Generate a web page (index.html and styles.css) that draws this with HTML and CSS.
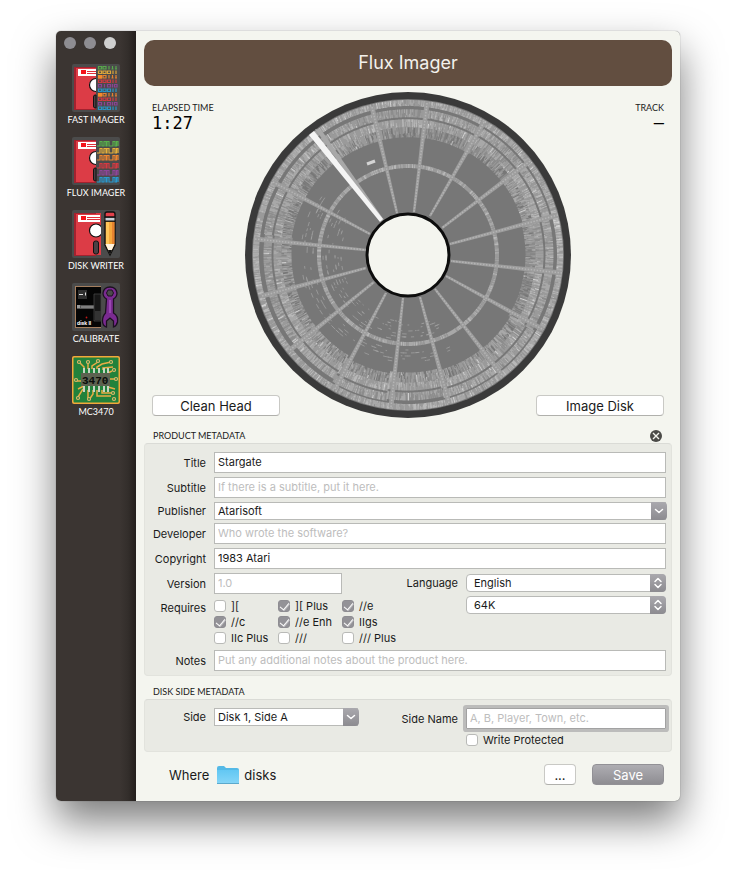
FILE: index.html
```html
<!DOCTYPE html>
<html lang="en">
<head>
<meta charset="utf-8">
<meta name="viewport" content="width=device-width, initial-scale=1">
<title>Flux Imager</title>
<link rel="stylesheet" href="styles.css">
</head>
<body>
<svg class="defs" width="0" height="0" aria-hidden="true">
  <defs>
    <g id="floppy">
      <path d="M2 3h22v43H2z" fill="#a3222f"/>
      <path d="M4 4h20v41H4z" fill="#dc3c46"/>
      <path d="M6 5h18v7H6z" fill="#fff"/>
      <path d="M9 6h5v4H9z" fill="#f5141c"/>
      <path d="M15 7h9v1h-9zM15 9h9v1h-9z" fill="#e0303a"/>
    </g>
    <g id="floppy-half">
      <use href="#floppy"/>
      <path d="M24 14.500a6.500 6.500 0 0 0 0 13z" fill="#fff"/>
      <path d="M24 14.500a6.500 6.500 0 0 0 0 13" fill="none" stroke="#111" stroke-width="1.200"/>
      <path d="M24 31h-1q-1.500 0-1.500 2v9q0 2 1.500 2h1z" fill="#4a4044" stroke="#111"/>
    </g>
    <path id="bits-a" d="M.5.5h3v2.500h-3zM5 .5h3v2.500H5zM11 0v3.500M14.500 0v3.500M18 0v3.500M13.500 3h2M17 3h2" fill="none"/>
    <path id="bits-b" d="M.5.500h3v2.500h-3zM5 .5h3v2.500H5zM9.500 .5h3v2.500h-3zM15 0v3.500M18 0v3.500" fill="none"/>
    <path id="bits-c" d="M.5.5h3v2.500h-3zM6.500 0v3.500M9.500 .5h3v2.500h-3zM14.500 0v3.500M16.500 .5h2.500v2.500h-2.500z" fill="none"/>
    <path id="wave" d="M0 5h3V.5h2V5h2V.5h2V5h1V.5h2V5h4V.5h2V5h1.500V.5H21V5" fill="none"/>
    <linearGradient id="folder-fill" x1="0" y1="0" x2="0" y2="1">
      <stop offset="0" stop-color="#62c7f3"/><stop offset="1" stop-color="#86d6f8"/>
    </linearGradient>
  </defs>
</svg>

<div class="window">
  <nav class="sidebar" aria-label="Tools">
    <div class="lights">
      <button class="light" aria-label="Close"></button>
      <button class="light" aria-label="Minimize"></button>
      <button class="light light-off" aria-label="Zoom"></button>
    </div>
    <a class="tool" href="#fast">
      <svg class="tool-icon" viewBox="0 0 48 48">
        <rect width="48" height="48" rx="2" fill="#4b4b4b"/>
        <use href="#floppy-half"/>
        <g stroke-width="1.200">
          <use href="#bits-a" x="26" y="2" stroke="#58a84b"/>
          <use href="#bits-b" x="26" y="6.500" stroke="#dda63a"/>
          <use href="#bits-a" x="26" y="11" stroke="#e8812f"/>
          <use href="#bits-b" x="26" y="15.500" stroke="#cf3a41"/>
          <use href="#bits-c" x="26" y="20" stroke="#8a4394"/>
          <use href="#bits-b" x="26" y="24.500" stroke="#2a94c4"/>
          <use href="#bits-a" x="26" y="29" stroke="#e8812f"/>
          <use href="#bits-b" x="26" y="33.500" stroke="#cf3a41"/>
          <use href="#bits-c" x="26" y="38" stroke="#8a4394"/>
          <use href="#bits-b" x="26" y="42.500" stroke="#2a94c4"/>
          <path d="M26 11h4v3.500h-4zM26 29h4v3.500h-4z" fill="#f58a2c"/>
        </g>
      </svg>
      <span>FAST IMAGER</span>
    </a>
    <a class="tool" href="#flux">
      <svg class="tool-icon" viewBox="0 0 48 48">
        <rect width="48" height="48" rx="2" fill="#4b4b4b"/>
        <use href="#floppy-half"/>
        <g stroke-width="1.200">
          <use href="#wave" x="25" y="4" stroke="#58b04b"/>
          <use href="#wave" x="25" y="11" stroke="#e6b13c"/>
          <use href="#wave" x="25" y="18" stroke="#ee852f"/>
          <use href="#wave" x="25" y="26" stroke="#d63a41"/>
          <use href="#wave" x="25" y="33" stroke="#8f459a"/>
          <use href="#wave" x="25" y="40" stroke="#2a9ad0"/>
        </g>
      </svg>
      <span>FLUX IMAGER</span>
    </a>
    <a class="tool" href="#writer">
      <svg class="tool-icon" viewBox="0 0 48 48">
        <rect width="48" height="48" rx="2" fill="#4b4b4b"/>
        <use href="#floppy"/>
        <path d="M24 3h5v42h-5z" fill="#dc3c46"/>
        <path d="M24 5h4v7h-4z" fill="#fff"/>
        <path d="M24 7h4v1h-4zM24 9h4v1h-4z" fill="#e0303a"/>
        <circle cx="24" cy="20.500" r="6.500" fill="#fff" stroke="#111" stroke-width="1.200"/>
        <rect x="21.500" y="31" width="5" height="13" rx="2" fill="#4a4044" stroke="#111"/>
        <path d="M29 2h4v44h-4z" fill="#4b4b4b"/>
        <path d="M33 11h10v24l-5 10-5-10z" fill="#f6a83c" stroke="#111" stroke-width="1.400"/>
        <path d="M34 12h3v22h-3z" fill="#ffc65a"/>
        <path d="M40 12h2.500v22H40z" fill="#e68330"/>
        <path d="M33.500 34h9L38 44z" fill="#fff3df"/>
        <path d="M36 40h4l-2 5z" fill="#111"/>
        <path d="M33 7h10v4H33z" fill="#c9d1d8" stroke="#111"/>
        <path d="M33 7V4q0-2 2-2h6q2 0 2 2v3z" fill="#e0414b" stroke="#111" stroke-width="1.400"/>
      </svg>
      <span>DISK WRITER</span>
    </a>
    <a class="tool" href="#calibrate">
      <svg class="tool-icon" viewBox="0 0 48 48">
        <rect width="48" height="48" rx="2" fill="#4b4b4b"/>
        <path d="M3 3h26v42H3z" fill="#a57e5e"/>
        <path d="M4 4h25v40H4z" fill="#050505"/>
        <path d="M6 7h9v9H6z" fill="#303030"/>
        <path d="M7 11h4v1H7zM13 9.500h1v3h-1z" fill="#ddd"/>
        <path d="M5 22h17v4H5z" fill="#555"/><path d="M9 23.500h13v1H9z" fill="#aaa"/><path d="M5 22h3v3H5z" fill="#999"/>
        <path d="M22 11h7v27h-7z" fill="#171717" stroke="#444" stroke-width=".8"/>
        <path d="M23 28h6v9h-6z" fill="#333"/>
        <circle cx="14.500" cy="34.500" r=".9" fill="#c21919"/>
        <text x="5" y="42" class="disk-name">disk II</text>
        <path d="M34.500 16Q31 14 31 10q1-6 7-6t7 6q0 4-3.500 6v14q5 3 4 9-1 4-4 5v-6l-3.500-3-3.500 3v6q-4-1-4-6 0-5 3-8z" fill="#7a2b91" stroke="#1c1020" stroke-width="1.300"/>
        <path d="M34.500 10 36 7h4l1.500 3L40 13h-4z" fill="#4b4b4b" stroke="#1c1020"/>
        <path d="M37 17h2v13h-2z" fill="#9a48b2"/>
      </svg>
      <span>CALIBRATE</span>
    </a>
    <a class="tool" href="#mc3470">
      <svg class="tool-icon" viewBox="0 0 48 48">
        <rect width="48" height="48" rx="2" fill="#f2a93a"/>
        <rect x="1.500" y="1.500" width="45" height="45" rx="1" fill="#22823b"/>
        <g fill="none" stroke="#e8ac45" stroke-width="1.500">
          <path d="M12 14V11L7 6M16 13V6M20 13V10l6-4M25 13v-2l5-3 9-2M31 14v-2l10-1M36 17l4-2M38 23h6M10 25H4M12 30l-6 3M11 33l-5 8M16 34v8M21 34v4l-4 6M25 34v6h14M30 34v3h11M36 31l7 2"/>
        </g>
        <g fill="#22823b" stroke="#ddb96b" stroke-width="1.200">
          <circle cx="7" cy="6" r="1.500"/><circle cx="16" cy="6" r="1.500"/><circle cx="26" cy="5" r="1.500"/><circle cx="39" cy="6" r="1.500"/><circle cx="42" cy="14" r="1.500"/><circle cx="44" cy="23" r="1.500"/><circle cx="4" cy="24" r="1.500"/><circle cx="6" cy="42" r="1.500"/><circle cx="17" cy="43" r="1.500"/><circle cx="41" cy="37" r="1.500"/><circle cx="42" cy="43" r="1.500"/>
        </g>
        <path d="M12 12v24M17 12v24M22 12v24M27 12v24M32 12v24M36 12v24" stroke="#c7d5c4" stroke-width="2"/>
        <path d="M9 17h29v13H9z" fill="#5c6250"/>
        <text x="10" y="28" class="chip-name">3470</text>
      </svg>
      <span>MC3470</span>
    </a>
  </nav>

  <main class="main">
    <h1 class="banner">Flux Imager</h1>

    <section class="stage">
      <svg class="disk" id="disk" viewBox="-163 -163 326 326" role="img" aria-label="Disk flux map">
        <circle r="163" fill="#3a3a3a"/>
        <circle r="156" fill="#777"/>
        <g id="flux"></g>
        <circle r="41" fill="#f4f5ef" stroke="#0d0d0d" stroke-width="3"/>
      </svg>
      <div class="stat">
        <span class="stat-name">ELAPSED TIME</span>
        <span class="stat-value">1:27</span>
      </div>
      <div class="stat stat-right">
        <span class="stat-name">TRACK</span>
        <span class="stat-value">–</span>
      </div>
      <button class="push stage-button">Clean Head</button>
      <button class="push stage-button stage-button-right">Image Disk</button>
    </section>

    <div class="section-head">
      <h2>PRODUCT METADATA</h2>
      <button class="clear" aria-label="Clear metadata">
        <svg viewBox="0 0 12 12"><circle cx="6" cy="6" r="6" fill="#4b4b48"/><path d="M3 3l6 6M9 3l-6 6" stroke="#f4f5ef" stroke-width="1.400"/></svg>
      </button>
    </div>
    <form class="panel product">
      <div class="row"><label for="title">Title</label><input class="field" id="title" type="text" value="Stargate"></div>
      <div class="row"><label for="subtitle">Subtitle</label><input class="field" id="subtitle" type="text" placeholder="If there is a subtitle, put it here."></div>
      <div class="row row-tight"><label for="publisher">Publisher</label>
        <div class="combo"><select id="publisher"><option>Atarisoft</option></select><svg class="arrow" viewBox="0 0 16 18"><path d="M4.500 7.500L8 10.500l3.500-3"/></svg></div>
      </div>
      <div class="row"><label for="developer">Developer</label><input class="field" id="developer" type="text" placeholder="Who wrote the software?"></div>
      <div class="row"><label for="copyright">Copyright</label><input class="field" id="copyright" type="text" value="1983 Atari"></div>
      <div class="split">
        <div class="split-left">
          <div class="row"><label for="version">Version</label><input class="field field-short" id="version" type="text" placeholder="1.0"></div>
          <div class="row row-top" role="group" aria-labelledby="requires"><span class="label" id="requires">Requires</span>
            <div class="checks">
              <label class="check"><input type="checkbox">][</label>
              <label class="check"><input type="checkbox" checked>][ Plus</label>
              <label class="check"><input type="checkbox" checked>//e</label>
              <label class="check"><input type="checkbox" checked>//c</label>
              <label class="check"><input type="checkbox" checked>//e Enh</label>
              <label class="check"><input type="checkbox" checked>IIgs</label>
              <label class="check"><input type="checkbox">IIc Plus</label>
              <label class="check"><input type="checkbox">///</label>
              <label class="check"><input type="checkbox">/// Plus</label>
            </div>
          </div>
        </div>
        <div class="split-right">
          <label for="language">Language</label>
          <div class="popup"><select id="language"><option>English</option></select><svg class="arrow" viewBox="0 0 16 18"><path d="M5 7.500L8 4.500l3 3M5 10.500l3 3 3-3"/></svg></div>
          <div class="popup memory"><select aria-label="Memory"><option>64K</option></select><svg class="arrow" viewBox="0 0 16 18"><path d="M5 7.500L8 4.500l3 3M5 10.500l3 3 3-3"/></svg></div>
        </div>
      </div>
      <div class="row"><label for="notes">Notes</label><input class="field" id="notes" type="text" placeholder="Put any additional notes about the product here."></div>
    </form>

    <div class="section-head section-head-next"><h2>DISK SIDE METADATA</h2></div>
    <form class="panel side">
      <div class="row row-tight"><label for="side">Side</label>
        <div class="combo combo-short"><select id="side"><option>Disk 1, Side A</option></select><svg class="arrow" viewBox="0 0 16 18"><path d="M4.500 7.500L8 10.500l3.500-3"/></svg></div>
      </div>
      <div class="side-name">
        <label for="side-name">Side Name</label>
        <input class="field focused" id="side-name" type="text" placeholder="A, B, Player, Town, etc.">
        <label class="check protect"><input type="checkbox">Write Protected</label>
      </div>
    </form>

    <footer class="footer">
      <span>Where</span>
      <svg class="folder" viewBox="0 0 24 20"><path d="M1 3q0-2 2-2h5l2 2h11q2 0 2 2v13H1z" fill="#54b9e6"/><path d="M1 5h22v13q0 1-1 1H2q-1 0-1-1z" fill="url(#folder-fill)"/><path d="M1 18.500h22" stroke="#5ba9cc"/></svg>
      <span class="folder-name">disks</span>
      <button class="push browse">...</button>
      <button class="push save">Save</button>
    </footer>
  </main>
</div>
<script src="disk.js"></script>
</body>
</html>
```

FILE: disk.js
```js
// Draws the flux map: recorded tracks as radial ticks, sector seams as spokes.
(function () {
  var flux = document.getElementById('flux');
  var seed = 3470;

  function random() {
    seed = (seed * 1664525 + 1013904223) % 4294967296;
    return seed / 4294967296;
  }

  function add(name, attributes) {
    var node = document.createElementNS('http://www.w3.org/2000/svg', name);
    Object.keys(attributes).forEach(function (key) { node.setAttribute(key, attributes[key]); });
    flux.appendChild(node);
  }

  function point(radius, angle) {
    return (radius * Math.cos(angle)).toFixed(2) + ' ' + (radius * Math.sin(angle)).toFixed(2);
  }

  var shades = ['#7e7e7e', '#8c8c8c', '#9a9a9a', '#a8a8a8', '#b8b8b8', '#d0d0d0'];
  var paths = shades.map(function () { return ''; });

  function tick(inner, outer, angle, shade) {
    paths[shade] += 'M' + point(inner, angle) + 'L' + point(outer, angle);
  }

  // Seams, as outer and inner ends, clockwise from the index mark.
  var seams = [
    [-36, -148, -11, -42], [19, -152, 6, -43], [76, -133, 22, -39], [122, -94, 34, -27],
    [150, -40, 42, -11], [154, 18, 43, 6], [134, 74, 38, 21], [94, 120, 27, 34],
    [41, 148, 12, 42], [-17, 152, -5, 43], [-73, 134, -22, 38], [-118, 95, -34, 27],
    [-146, 41, -42, 13], [-153, -16, -42, -5], [-135, -73, -38, -21]
  ];

  // Outer tracks: every sector has its own density and blank gaps.
  var sectors = 16;
  var bands = [[155, 149, 3], [149, 146, -1], [146, 138, 2.4], [138, 136, -1], [136, 128, 2.6], [128, 118, 1.7]];
  for (var s = 0; s < sectors; s++) {
    var start = -1.815 + s * Math.PI * 2 / sectors;
    var end = start + Math.PI * 2 / sectors;
    var shift = random() * 3 - 1.5;
    bands.forEach(function (band, b) {
      var outer = band[0] - (b > 1 ? shift : 0);
      var inner = band[1] - (b > 0 ? shift : 0);
      if (band[2] < 0) { return; }
      var level = band[2] + (random() - 0.5) * 0.8;
      for (var a = start; a < end; a += 1 / outer) {
        // Neighbouring ticks share a tone; their lengths vary inside the band.
        var from = outer;
        while (from > inner) {
          var to = Math.max(inner, from - 2 - random() * 6);
          if (b < 5 || random() < 0.8) {
            var shade = Math.round(level + (random() - 0.5) * 2.6 + (random() < 0.04 ? 2 : 0));
            tick(to, from, a, Math.max(0, Math.min(5, shade)));
          }
          from = to;
        }
      }
    });
  }

  // The single track written half way in.
  for (var m = 0; m < Math.PI * 2; m += 0.012) {
    tick(87, 91, m, 2 + Math.floor(random() * 2.4));
  }

  shades.forEach(function (shade, i) {
    add('path', { d: paths[i], stroke: shade, 'stroke-width': 1.1, fill: 'none' });
  });

  // Stray flux on the left and lower tracks.
  var stray = '';
  for (var n = 0; n < 230; n++) {
    var angle = 1.1 + random() * 2.6;
    var distance = random() < 0.6 ? 67 + Math.round(random() * 6) * 3 : 95 + Math.round(random() * 4) * 3;
    stray += 'M' + point(distance, angle) + 'L' + point(distance, angle + 0.015 + random() * 0.045);
  }
  add('path', { d: stray, stroke: '#a0a0a0', 'stroke-width': 0.8, fill: 'none' });
  add('path', { d: 'M-41 -91L-33 -94', stroke: '#d4d4d4', 'stroke-width': 3 });

  seams.forEach(function (p) {
    var span = Math.hypot(p[0] - p[2], p[1] - p[3]);
    var dx = (p[0] - p[2]) / span;
    var dy = (p[1] - p[3]) / span;
    var points = [
      [p[0] - dy * 2.5, p[1] + dx * 2.5], [p[0] + dy * 2.5, p[1] - dx * 2.5],
      [p[2] + dy * 1.2, p[3] - dx * 1.2], [p[2] - dy * 1.2, p[3] + dx * 1.2]
    ].map(function (q) { return q[0].toFixed(1) + ',' + q[1].toFixed(1); }).join(' ');
    add('polygon', { points: points, fill: '#9d9d9d' });
    var line = 'M' + p[0] + ' ' + p[1] + 'L' + p[2] + ' ' + p[3];
    add('path', { d: line, stroke: '#b4b4b4', 'stroke-width': 1.5, 'stroke-dasharray': '1.5 1.5', fill: 'none' });
  });

  // Index mark.
  add('polygon', { points: '-93,-126 -86,-124 -24,-35 -27,-34', fill: '#a8a8a8' });
  add('polygon', { points: '-99,-120 -94,-124 -25,-36 -28,-33', fill: '#f4f4f4' });
})();
```

FILE: styles.css
```css
* { box-sizing: border-box; }

body {
  margin: 0;
  padding: 31px 56px 80px;
  background: #fff;
  color: #1a1a1a;
  font: 11px/12px Inter, "Liberation Sans", sans-serif;
}

button, input, select { font: inherit; color: inherit; margin: 0; }
.defs { position: absolute; }

.window {
  display: flex;
  overflow: hidden;
  border-radius: 5px;
  background: #f4f5ef;
  box-shadow: 0 20px 40px rgba(0, 0, 0, .52), 0 0 1px rgba(0, 0, 0, .6);
}

/* Sidebar */
.sidebar {
  flex: 0 0 80px;
  background: linear-gradient(to right, #3b3532 64px, #332e2b 72px, #241f1d);
}

.lights { display: flex; gap: 8px; padding: 6px 8px 15px; }
.light { width: 12px; height: 12px; padding: 0; border: 0; border-radius: 50%; background: #8e8d92; }
.light-off { background: #d0d0d0; }

.tool {
  display: flex;
  flex-direction: column;
  align-items: center;
  gap: 2px;
  height: 73px;
  color: #fff;
  font: 9px/12px Lato, sans-serif;
  text-decoration: none;
  white-space: nowrap;
}
.tool-icon { width: 48px; height: 48px; }
.disk-name { font: bold 5px Inter, sans-serif; fill: #fff; }
.chip-name { font: bold 11px "Liberation Mono", monospace; fill: #0b0d0a; }

/* Main column */
.main { flex: 1; min-width: 0; padding: 9px 8px 16px; }

.banner {
  margin: 0 0 6px;
  border-radius: 10px;
  background: #624e40;
  color: #f3f1ec;
  font-size: 18px;
  font-weight: 400;
  line-height: 46px;
  text-align: center;
}

.stage {
  display: grid;
  grid-template-columns: 1fr 1fr;
  grid-template-rows: 1fr auto;
  padding: 0 8px;
}
.disk { grid-area: 1 / 1 / 3 / 3; justify-self: center; width: 326px; height: 326px; }
.stat { grid-area: 1 / 1; display: flex; flex-direction: column; align-items: flex-start; padding-top: 10px; }
.stat-right { grid-area: 1 / 2; align-items: flex-end; }
.stat-name { font: 9px/12px Lato, sans-serif; }
.stat-value { font: 17px/18px "DejaVu Sans Mono", monospace; color: #000; }
.stage-button { grid-area: 2 / 1; width: 128px; margin-bottom: 2px; }
.stage-button-right { grid-area: 2 / 2; justify-self: end; }

.push {
  height: 21px;
  padding: 0;
  border: 1px solid #c9c9c5;
  border-bottom-color: #b0b0ac;
  border-radius: 4px;
  background: #fff;
  font-size: 13px;
  line-height: 18px;
}

.section-head { display: flex; align-items: center; justify-content: space-between; height: 12px; margin: 12px 10px 1px 9px; }
.section-head-next { margin-top: 10px; }
.section-head h2 { margin: 0; font: 9px/12px Lato, sans-serif; }
.clear { width: 12px; height: 12px; padding: 0; border: 0; background: none; }
.clear svg { display: block; }

.panel { border: 1px solid #e2e3dd; border-top-color: #dadbd6; border-radius: 4px; background: #e9eae4; }
.product { display: flex; flex-direction: column; gap: 4px; padding: 8px 5px 4px; }

.row { display: grid; grid-template-columns: 56px 1fr; column-gap: 8px; align-items: center; }
.row > label, .row > .label { justify-self: end; }
.row-tight { height: 18px; }
.product .row-tight { margin-bottom: -1px; }
.row-top { align-items: start; }
.row-top .label { padding-top: 2px; }

.field {
  width: 100%;
  height: 21px;
  padding: 0 3px 1px;
  border: 1px solid #b9bab7;
  border-radius: 0;
  outline: 0;
  background: #fff;
}
.field::placeholder { color: #bdbdbd; opacity: 1; }
.field-short { width: 128px; }
.focused { border-color: #a2a2a2; box-shadow: 0 0 0 3px #bcbcbb; border-radius: 1px; }

.combo, .popup { position: relative; height: 18px; }
.combo select, .popup select {
  display: block;
  width: 100%;
  height: 18px;
  padding: 0 20px 0 3px;
  appearance: none;
  border: 1px solid #b9bab7;
  border-radius: 0;
  background: #fff;
}
.combo-short { width: 144px; }
.popup select { padding-left: 7px; border-radius: 4px; }
.arrow {
  position: absolute;
  top: 0;
  right: 0;
  width: 16px;
  height: 18px;
  border-radius: 0 4px 4px 0;
  background: linear-gradient(#aaa9ae, #8c8b90);
  pointer-events: none;
}
.combo .arrow { right: -1px; }
.arrow path { fill: none; stroke: #fff; stroke-width: 1.500; stroke-linecap: round; stroke-linejoin: round; }

.split { display: flex; justify-content: space-between; margin-bottom: 2px; }
.split-left { display: flex; flex-direction: column; gap: 6px; }
.split-right { display: grid; grid-template-columns: auto 200px; gap: 4px 8px; align-content: start; align-items: center; padding-top: 1px; }
.memory { grid-column: 2; }

.checks { display: grid; grid-template-columns: repeat(3, 64px); gap: 4px 0; }
.check { display: flex; align-items: center; gap: 5px; height: 12px; white-space: nowrap; }
.check input {
  display: grid;
  place-items: center;
  flex: none;
  width: 12px;
  height: 12px;
  appearance: none;
  border: 1px solid #b9bab7;
  border-radius: 3px;
  background: #fff;
}
.check input:checked { border-color: #8e8d92; background: #939297; }
.check input:checked::after {
  content: "";
  width: 4px;
  height: 8px;
  margin-top: -2px;
  border: solid #fff;
  border-width: 0 1px 1px 0;
  box-shadow: 1px 0 0 -0px rgba(255, 255, 255, .4);
  transform: rotate(40deg);
}

.side { display: flex; justify-content: space-between; align-items: flex-start; padding: 8px 5px 5px; }
.side-name { display: grid; grid-template-columns: auto 200px; gap: 5px 8px; align-items: center; }
.protect { grid-column: 2; }

.footer { display: flex; align-items: center; margin-top: 12px; padding: 0 8px 0 25px; font-size: 13px; }
.folder { width: 24px; height: 20px; margin: 0 4px 0 7px; }
.browse { width: 32px; margin: 0 16px 0 auto; }
.save { width: 72px; border-color: #929196; background: linear-gradient(#aeadb2, #8e8d92); color: #fff; }
```
